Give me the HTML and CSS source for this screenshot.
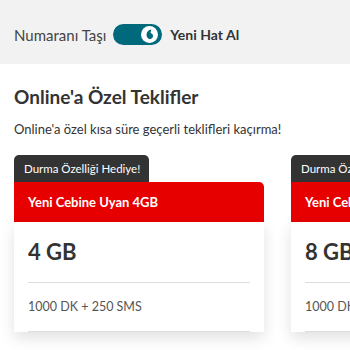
FILE: index.html
```html
<!DOCTYPE html>
<html lang="tr">
<head>
  <meta charset="UTF-8">
  <meta name="viewport" content="width=device-width, initial-scale=1.0">
  <title>Online'a Özel Teklifler</title>
  <link rel="stylesheet" href="styles.css">
</head>
<body>

  <div class="top-bar">
    <span class="switch-label">Numaranı Taşı</span>
    <span class="toggle">
      <span class="knob">
        <svg width="17" height="17" viewBox="0 0 16 16">
          <circle cx="8" cy="8" r="8" fill="#fff"/>
          <path d="M9.6 3.2c-2.4.3-4.4 2.3-4.4 5.1 0 2.3 1.4 4 3.3 4 1.6 0 2.8-1.2 2.8-2.8 0-1.5-.9-2.5-2.3-2.8 0-1 .4-2.1.6-3.5z" fill="#00697c"/>
        </svg>
      </span>
    </span>
    <span class="switch-label active">Yeni Hat Al</span>
  </div>

  <div class="intro">
    <h1>Online'a Özel Teklifler</h1>
    <p>Online'a özel kısa süre geçerli teklifleri kaçırma!</p>
  </div>

  <div class="offers">
    <div class="offer">
      <div class="tag">Durma Özelliği Hediye!</div>
      <div class="offer-title">Yeni Cebine Uyan 4GB</div>
      <div class="offer-body">
        <div class="amount">4 GB</div>
        <div class="detail">1000 DK + 250 SMS</div>
      </div>
    </div>
    <div class="offer">
      <div class="tag">Durma Özelliği Hediye!</div>
      <div class="offer-title">Yeni Cebine Uyan 8GB</div>
      <div class="offer-body">
        <div class="amount">8 GB</div>
        <div class="detail">1000 DK + 250 SMS</div>
      </div>
    </div>
  </div>

</body>
</html>
```

FILE: styles.css
```css
body {
  margin: 0;
  font-family: Lato, "Open Sans", sans-serif;
  color: #333;
  background-color: #fff;
  overflow: hidden;
}

.top-bar {
  height: 64px;
  background-color: #f2f2f2;
  display: flex;
  align-items: center;
  padding: 5px 0 0 14px;
  box-sizing: border-box;
}

.switch-label {
  font-size: 15px;
  color: #444;
}

.switch-label.active {
  font-size: 14px;
  font-weight: bold;
  color: #333;
}

.toggle {
  width: 49px;
  height: 21px;
  border-radius: 11px;
  background-color: #00697c;
  margin: 0 8px 0 7px;
  display: flex;
  align-items: center;
  justify-content: flex-end;
  padding-right: 4px;
  box-sizing: border-box;
}

.knob {
  display: flex;
}

.intro {
  padding: 16px 14px 0;
}

h1 {
  margin: 0;
  font-size: 19px;
  font-weight: bold;
  line-height: 34px;
}

.intro p {
  margin: 5px 0 0;
  font-size: 13px;
  line-height: 20px;
}

.offers {
  display: flex;
  gap: 27px;
  padding: 16px 14px 30px;
}

.offer {
  width: 250px;
  flex-shrink: 0;
}

.tag {
  display: inline-block;
  background-color: #333;
  color: #fff;
  font-size: 11.5px;
  line-height: 27px;
  padding: 0 9px 0 10px;
  border-radius: 5px 5px 0 0;
}

.offer-title {
  background-color: #e60000;
  color: #fff;
  font-size: 13px;
  font-weight: bold;
  line-height: 40px;
  padding: 0 14px;
  border-radius: 0 5px 0 0;
}

.offer-body {
  background-color: #fff;
  padding: 0 14px;
  box-shadow: 0 6px 14px rgba(0, 0, 0, 0.12);
}

.amount {
  font-size: 22px;
  font-weight: bold;
  line-height: 60px;
  border-bottom: 1px solid #ddd;
}

.detail {
  font-size: 12.5px;
  color: #555;
  line-height: 48px;
  border-bottom: 1px solid #ddd;
  margin-bottom: 30px;
}
```
